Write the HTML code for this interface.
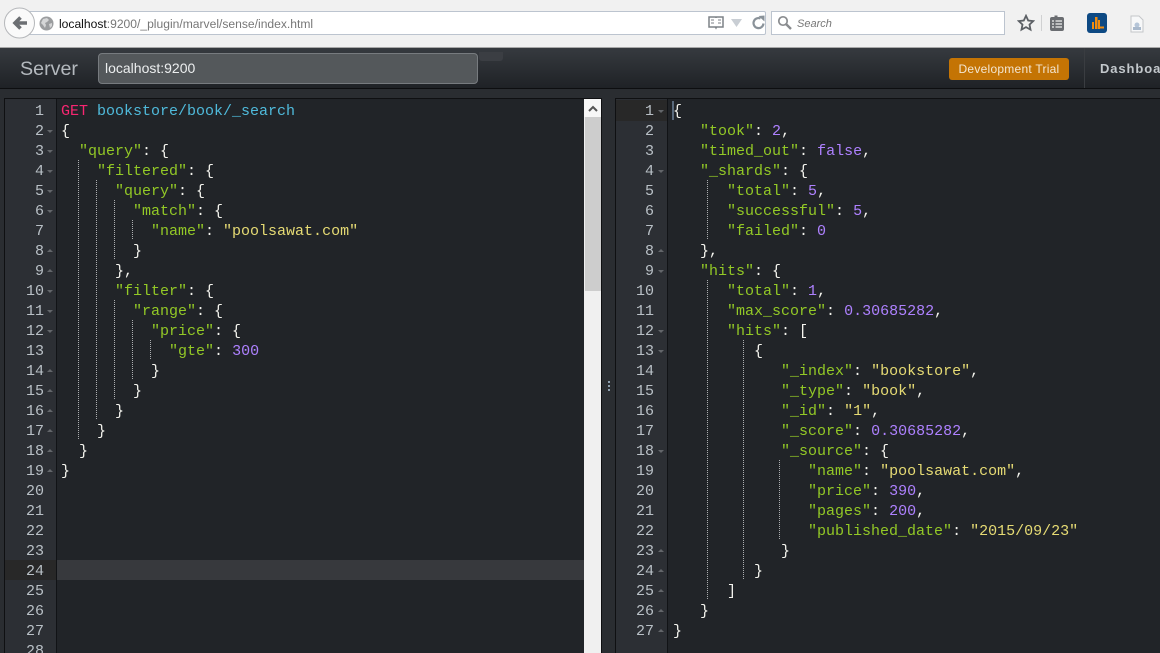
<!DOCTYPE html>
<html><head><meta charset="utf-8"><title>Sense</title>
<style>
html,body{margin:0;padding:0;width:1160px;height:653px;overflow:hidden;background:#2b2e32}
*{box-sizing:border-box}
#page{position:relative;width:1160px;height:653px;overflow:hidden}
.a{position:absolute}
#chrome{left:0;top:0;width:1160px;height:48px;background:#f1f1f1;border-bottom:1px solid #a9a9a9}
.box{background:#fff;border:1px solid #bcc4cf;height:24px;top:11px}
#url{left:59px;top:16px;font:12.1px/15px "Liberation Sans",sans-serif;color:#777;white-space:pre}
#url b{font-weight:normal;color:#111}
#bar{left:0;top:48px;width:1160px;height:41px;background:linear-gradient(#363a3f,#1f2226);border-bottom:1px solid #0d0e10}
#ed1,#ed2{background:#212428;top:99px;height:554px;overflow:hidden}
#ed1{left:5px;width:579px}
#ed2{left:616px;width:544px}
.gut{top:99px;height:554px;width:52px;background:#2c2f34;border-right:1px solid #111316}
pre{margin:0;font:15px/20px "Liberation Mono",monospace;color:#f4f4ee}
.num{text-align:right;color:#b9c0c6}
.k{color:#93c926}.s{color:#e6db74}.n{color:#ae81ff}.m{color:#f92672}.u{color:#4fbadb}
.g{width:1px;background:repeating-linear-gradient(#adafb1 0 1px,transparent 1px 2px)}
.fd,.fu{width:0;height:0;border-left:3px solid transparent;border-right:3px solid transparent}
.fd{border-top:3px solid #63666a}
.fu{border-bottom:3px solid #63666a}
</style></head><body><div id="page">

<div class="a" id="chrome"></div>
<div class="a box" style="left:25px;width:741px;border-radius:0 2px 2px 0"></div>
<svg class="a" style="left:3px;top:7px" width="32" height="32" viewBox="0 0 32 32">
<circle cx="16.500" cy="16" r="15" fill="#fafafa" stroke="#b5b7ba" stroke-width="1"/>
<path d="M24 16H12M17.500 10.500L12 16l5.500 5.500" fill="none" stroke="#6c6f73" stroke-width="3.600"/>
</svg>
<svg class="a" style="left:39px;top:16px" width="15" height="15" viewBox="0 0 15 15">
<circle cx="7.500" cy="7.500" r="7" fill="#9b9d9f"/>
<path d="M4 3l4-1 2 2-2 2-2 1 1 2-1 3-2-3-2-2zM10 8l3-1 0 3-2 2z" fill="#d5d6d7"/>
</svg>
<div class="a" id="url" style="top:17px"><b>localhost</b>:9200/_plugin/marvel/sense/index.html</div>
<svg class="a" style="left:707px;top:15px" width="60" height="16" viewBox="0 0 60 16">
<path d="M2 2h7l0 1 0-1h7v10H9.500L9 13 8.500 12H2z" fill="#fff" stroke="#7d8287" stroke-width="1.500"/>
<path d="M4 5h3M4 8h3M11 5h3M11 8h3" stroke="#7d8287"/>
<path d="M24 4h11l-5.500 8z" fill="#c9ced4"/>
<path d="M53.500 3.500a5 5 0 1 0 3 5" fill="none" stroke="#8a9299" stroke-width="2.200"/>
<path d="M51.500 1l6-.5 0 6z" fill="#8a9299"/>
</svg>
<div class="a box" style="left:771px;width:234px"></div>
<svg class="a" style="left:777px;top:15px" width="16" height="16" viewBox="0 0 16 16">
<circle cx="6" cy="6" r="4.200" fill="none" stroke="#8a8c8f" stroke-width="1.700"/>
<path d="M9 9l5 5" stroke="#8a8c8f" stroke-width="2.400"/>
</svg>
<div class="a" style="left:797px;top:17px;font:italic 11px/15px 'Liberation Sans',sans-serif;color:#777">Search</div>
<svg class="a" style="left:1017px;top:14px" width="18" height="18" viewBox="0 0 18 18">
<path d="M9 1.800l2.200 4.700 5 .6-3.700 3.500 1 5L9 13.100 4.500 15.600l1-5L1.800 7.100l5-.6z" fill="none" stroke="#5c6065" stroke-width="1.800"/>
</svg>
<div class="a" style="left:1041px;top:15px;width:1px;height:16px;background:#d0d1d2"></div>
<svg class="a" style="left:1049px;top:14px" width="16" height="18" viewBox="0 0 16 18">
<path d="M5.500 3V1.500h3V3H13a2 2 0 0 1 2 2v10a2 2 0 0 1-2 2H3a2 2 0 0 1-2-2V5a2 2 0 0 1 2-2z" fill="#6a6d71"/>
<path d="M3 7h2M3 10h2M3 13h2M6.500 7H13M6.500 10H13M6.500 13H13" stroke="#f1f1f1" stroke-width="1.300"/>
</svg>
<svg class="a" style="left:1087px;top:13px" width="20" height="20" viewBox="0 0 20 20">
<rect width="20" height="20" rx="3" fill="#0e4a84"/>
<path d="M5 9h2v7H5zM8 4h2.500v12H8zM11 7h2v9h-2zM13 13.500h4v2h-4z" fill="#f28c0e"/>
</svg>
<svg class="a" style="left:1129px;top:15px" width="16" height="18" viewBox="0 0 16 18">
<path d="M2 1h8l4 4v12H2z" fill="#f7f8f9" stroke="#c4c6c9"/>
<circle cx="8" cy="10" r="2.500" fill="#b5c5d8"/><rect x="4" y="12" width="8" height="3" fill="#a9b9cc"/>
</svg>

<div class="a" id="bar"></div>
<div class="a" style="left:20px;top:57px;font:19.700px/24px 'Liberation Sans',sans-serif;color:#b4b9be">Server</div>
<div class="a" style="left:98px;top:53px;width:380px;height:31px;background:#54585b;border:1px solid #777b7f;border-radius:4px;font:14px/29px 'Liberation Sans',sans-serif;color:#eceeef;padding-left:6px">localhost:9200</div>
<div class="a" style="left:479px;top:52px;width:24px;height:9px;background:#3b3e43;border-radius:0 0 3px 3px"></div>
<div class="a" style="left:949px;top:58px;width:120px;height:22px;background:#c47404;border-radius:3px;font:12px/22px 'Liberation Sans',sans-serif;letter-spacing:.25px;color:#f3e6d2;text-align:center">Development Trial</div>
<div class="a" style="left:1084px;top:48px;width:1px;height:40px;background:#3a3d41"></div>
<div class="a" style="left:1100px;top:60px;font:bold 13px/17px 'Liberation Sans',sans-serif;letter-spacing:.9px;color:#c3c8cc;white-space:pre">Dashboard</div>

<!-- panel frames -->
<div class="a" style="left:0;top:89px;width:1160px;height:564px;background:#2a2d31"></div>
<div class="a" style="left:4px;top:98px;width:598px;height:555px;background:#0f1012"></div>
<div class="a" style="left:615px;top:98px;width:545px;height:555px;background:#0f1012"></div>

<!-- left editor -->
<div class="a" id="ed1"></div>
<div class="a gut" style="left:5px"></div>
<div class="a" style="left:5px;top:560px;width:51px;height:20px;background:#282828"></div>
<div class="a" style="left:57px;top:560px;width:527px;height:20px;background:#37393d"></div>
<pre class="a num" style="left:5px;top:102px;width:39px">1
2
3
4
5
6
7
8
9
10
11
12
13
14
15
16
17
18
19
20
21
22
23
24
25
26
27
28</pre>
<div class="a fd" style="left:47px;top:130px"></div>
<div class="a fd" style="left:47px;top:150px"></div>
<div class="a fd" style="left:47px;top:170px"></div>
<div class="a fd" style="left:47px;top:190px"></div>
<div class="a fd" style="left:47px;top:210px"></div>
<div class="a fu" style="left:47px;top:249px"></div>
<div class="a fu" style="left:47px;top:269px"></div>
<div class="a fd" style="left:47px;top:290px"></div>
<div class="a fd" style="left:47px;top:310px"></div>
<div class="a fd" style="left:47px;top:330px"></div>
<div class="a fu" style="left:47px;top:369px"></div>
<div class="a fu" style="left:47px;top:389px"></div>
<div class="a fu" style="left:47px;top:409px"></div>
<div class="a fu" style="left:47px;top:429px"></div>
<div class="a fu" style="left:47px;top:449px"></div>
<div class="a fu" style="left:47px;top:469px"></div>

<div class="a g" style="left:78px;top:160px;height:280px"></div>
<div class="a g" style="left:96px;top:180px;height:240px"></div>
<div class="a g" style="left:114px;top:200px;height:60px"></div>
<div class="a g" style="left:114px;top:300px;height:100px"></div>
<div class="a g" style="left:132px;top:220px;height:20px"></div>
<div class="a g" style="left:132px;top:320px;height:60px"></div>
<div class="a g" style="left:150px;top:340px;height:20px"></div>

<pre class="a" style="left:61px;top:102px"><span class="m">GET</span> <span class="u">bookstore/book/_search</span>
{
  <span class="k">"query"</span>: {
    <span class="k">"filtered"</span>: {
      <span class="k">"query"</span>: {
        <span class="k">"match"</span>: {
          <span class="k">"name"</span>: <span class="s">"poolsawat.com"</span>
        }
      },
      <span class="k">"filter"</span>: {
        <span class="k">"range"</span>: {
          <span class="k">"price"</span>: {
            <span class="k">"gte"</span>: <span class="n">300</span>
          }
        }
      }
    }
  }
}</pre>

<!-- scrollbar -->
<div class="a" style="left:584px;top:99px;width:17px;height:554px;background:#f0f0f0"></div>
<div class="a" style="left:585px;top:117px;width:16px;height:174px;background:#cdcdcd"></div>
<div class="a" style="left:584px;top:99px;width:17px;height:18px;background:#f7f7f7"></div>
<svg class="a" style="left:588px;top:105px" width="10" height="7" viewBox="0 0 10 7"><path d="M1 6l4-4 4 4" fill="none" stroke="#555" stroke-width="2"/></svg>

<!-- resizer -->
<div class="a" style="left:608px;top:381px;width:2px;height:2px;background:#8ea0b0"></div>
<div class="a" style="left:608px;top:385px;width:2px;height:2px;background:#8ea0b0"></div>
<div class="a" style="left:608px;top:389px;width:2px;height:2px;background:#8ea0b0"></div>

<!-- right editor -->
<div class="a" id="ed2"></div>
<div class="a gut" style="left:616px"></div>
<div class="a" style="left:616px;top:100px;width:51px;height:21px;background:#282828"></div>
<div class="a" style="left:672px;top:101px;width:2px;height:19px;background:#5a6a7c"></div>
<pre class="a num" style="left:616px;top:102px;width:38px">1
2
3
4
5
6
7
8
9
10
11
12
13
14
15
16
17
18
19
20
21
22
23
24
25
26
27</pre>
<div class="a fd" style="left:658px;top:110px"></div>
<div class="a fd" style="left:658px;top:170px"></div>
<div class="a fu" style="left:658px;top:249px"></div>
<div class="a fd" style="left:658px;top:270px"></div>
<div class="a fd" style="left:658px;top:330px"></div>
<div class="a fd" style="left:658px;top:350px"></div>
<div class="a fd" style="left:658px;top:450px"></div>
<div class="a fu" style="left:658px;top:549px"></div>
<div class="a fu" style="left:658px;top:569px"></div>
<div class="a fu" style="left:658px;top:589px"></div>
<div class="a fu" style="left:658px;top:609px"></div>
<div class="a fu" style="left:658px;top:629px"></div>

<div class="a g" style="left:707px;top:180px;height:60px"></div>
<div class="a g" style="left:707px;top:280px;height:320px"></div>
<div class="a g" style="left:743px;top:340px;height:240px"></div>
<div class="a g" style="left:779px;top:460px;height:80px"></div>

<pre class="a" style="left:673px;top:102px">{
   <span class="k">"took"</span>: <span class="n">2</span>,
   <span class="k">"timed_out"</span>: <span class="n">false</span>,
   <span class="k">"_shards"</span>: {
      <span class="k">"total"</span>: <span class="n">5</span>,
      <span class="k">"successful"</span>: <span class="n">5</span>,
      <span class="k">"failed"</span>: <span class="n">0</span>
   },
   <span class="k">"hits"</span>: {
      <span class="k">"total"</span>: <span class="n">1</span>,
      <span class="k">"max_score"</span>: <span class="n">0.30685282</span>,
      <span class="k">"hits"</span>: [
         {
            <span class="k">"_index"</span>: <span class="s">"bookstore"</span>,
            <span class="k">"_type"</span>: <span class="s">"book"</span>,
            <span class="k">"_id"</span>: <span class="s">"1"</span>,
            <span class="k">"_score"</span>: <span class="n">0.30685282</span>,
            <span class="k">"_source"</span>: {
               <span class="k">"name"</span>: <span class="s">"poolsawat.com"</span>,
               <span class="k">"price"</span>: <span class="n">390</span>,
               <span class="k">"pages"</span>: <span class="n">200</span>,
               <span class="k">"published_date"</span>: <span class="s">"2015/09/23"</span>
            }
         }
      ]
   }
}</pre>
</div></body></html>
